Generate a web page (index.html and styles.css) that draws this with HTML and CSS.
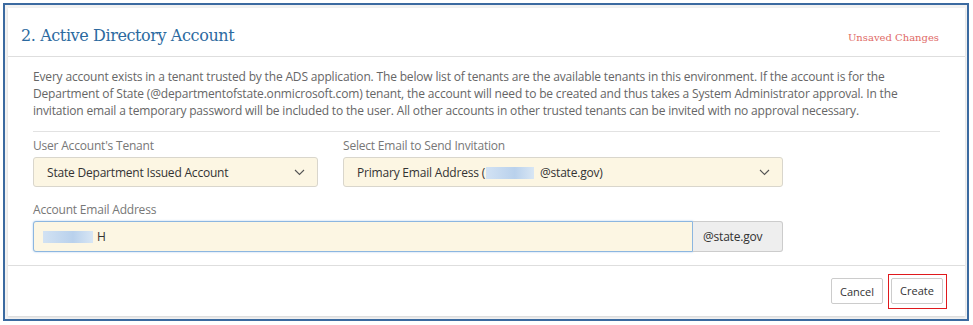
FILE: index.html
```html
<!DOCTYPE html>
<html lang="en">
<head>
    <meta charset="UTF-8">
    <meta name="viewport" content="width=device-width, initial-scale=1.0">
    <title>Active Directory Account</title>
    <link rel="stylesheet" href="styles.css">
</head>
<body>
<div class="frame">
    <div class="card">
        <div class="card-header">
            <h2 class="card-title">2. Active Directory Account</h2>
            <span class="unsaved">Unsaved Changes</span>
        </div>

        <div class="card-body">
            <p class="intro">Every account exists in a tenant trusted by the ADS application. The below list of tenants are the available tenants in this environment. If the account is for the Department of State (@departmentofstate.onmicrosoft.com) tenant, the account will need to be created and thus takes a System Administrator approval. In the invitation email a temporary password will be included to the user. All other accounts in other trusted tenants can be invited with no approval necessary.</p>

            <div class="row">
                <div class="form-group tenant">
                    <label>User Account's Tenant</label>
                    <div class="select">
                        <span>State Department Issued Account</span>
                        <svg class="chevron" width="11" height="7" viewBox="0 0 11 7"><path d="M1 1 L5.5 5.5 L10 1" fill="none" stroke="#555" stroke-width="1.1"/></svg>
                    </div>
                </div>
                <div class="form-group invite">
                    <label>Select Email to Send Invitation</label>
                    <div class="select">
                        <span>Primary Email Address (<span class="blur wide"></span>@state.gov)</span>
                        <svg class="chevron" width="11" height="7" viewBox="0 0 11 7"><path d="M1 1 L5.5 5.5 L10 1" fill="none" stroke="#555" stroke-width="1.1"/></svg>
                    </div>
                </div>
            </div>

            <div class="form-group">
                <label>Account Email Address</label>
                <div class="input-group">
                    <div class="input"><span class="blur"></span>H</div>
                    <div class="addon">@state.gov</div>
                </div>
            </div>
        </div>

        <div class="card-footer">
            <button class="btn">Cancel</button>
            <div class="highlight">
                <button class="btn">Create</button>
            </div>
        </div>
    </div>
</div>
</body>
</html>
```

FILE: styles.css
```css
* {
    margin: 0;
    padding: 0;
    box-sizing: border-box;
    font-family: "Open Sans", sans-serif;
}

body {
    background-color: white;
    padding: 3px 4px 4px 3px;
}

.frame {
    border: 2px solid #3b6aa0;
    background-color: #f2f2f2;
    padding: 3px 2px 3px 3px;
    height: 318px;
}

.card {
    background-color: white;
    box-shadow: 0 1px 2px rgba(0, 0, 0, 0.12);
    height: 100%;
    display: flex;
    flex-direction: column;
}

.card-header {
    display: flex;
    justify-content: space-between;
    align-items: center;
    height: 49px;
    padding: 6px 26px 0 13px;
    border-bottom: 1px solid #dedede;
}

.card-title {
    font-family: "DejaVu Serif", serif;
    font-weight: normal;
    font-size: 16px;
    letter-spacing: -0.4px;
    color: #2c6aa0;
}

.unsaved {
    font-family: "DejaVu Serif", serif;
    font-size: 10px;
    color: #e06a66;
    padding-top: 4px;
}

.card-body {
    padding: 11px 25px 13px 25px;
    border-bottom: 1px solid #dedede;
}

.intro {
    font-size: 12px;
    line-height: 17px;
    color: #666;
    letter-spacing: -0.17px;
    padding-bottom: 12px;
    border-bottom: 1px solid #e2e2e2;
    margin-bottom: 5px;
}

.row {
    display: flex;
    gap: 25px;
    margin-bottom: 14px;
}

.form-group label {
    display: block;
    font-size: 12px;
    color: #777;
    letter-spacing: -0.2px;
    line-height: 17px;
    margin-bottom: 3px;
}

.tenant {
    width: 285px;
}

.invite {
    width: 440px;
}

.select {
    display: flex;
    justify-content: space-between;
    align-items: center;
    height: 30px;
    padding: 0 12px 0 13px;
    background-color: #fcf6e3;
    border: 1px solid #d9d6cc;
    border-radius: 3px;
    font-size: 12px;
    color: #333;
    letter-spacing: -0.2px;
}

.blur {
    display: inline-block;
    width: 50px;
    height: 12px;
    margin-right: 4px;
    vertical-align: -2px;
    background: linear-gradient(to right, #d2e2f3, #b9d1ec 60%, #d8e6f4);
}

.blur.wide {
    width: 48px;
    margin-left: 1px;
    margin-right: 6px;
}

.input-group {
    display: flex;
    width: 750px;
    height: 31px;
}

.input {
    flex: 1;
    display: flex;
    align-items: center;
    padding-left: 9px;
    background-color: #fcf6e3;
    border: 1px solid #8cb6e0;
    border-radius: 3px 0 0 3px;
    box-shadow: 0 0 2px rgba(102, 160, 220, 0.6);
    font-size: 12px;
    color: #333;
}

.addon {
    width: 90px;
    display: flex;
    align-items: center;
    padding-left: 10px;
    background-color: #eee;
    border: 1px solid #ccc;
    border-left: none;
    border-radius: 0 3px 3px 0;
    font-size: 12px;
    color: #333;
    letter-spacing: -0.2px;
}

.card-footer {
    display: flex;
    justify-content: flex-end;
    align-items: center;
    gap: 5px;
    padding: 0 18px 0 0;
    flex: 1;
}

.btn {
    height: 26px;
    width: 52px;
    background-color: white;
    border: 1px solid #ccc;
    border-radius: 2px;
    font-family: "Open Sans", sans-serif;
    font-size: 11px;
    color: #333;
}

.highlight {
    border: 1px solid #e0191d;
    padding: 3px 3px 4px 2px;
}
```
